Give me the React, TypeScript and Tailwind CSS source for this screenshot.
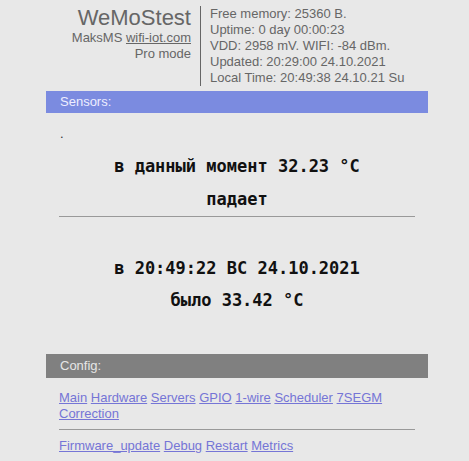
const info = [
  "Free memory: 25360 B.",
  "Uptime: 0 day 00:00:23",
  "VDD: 2958 mV. WIFI: -84 dBm.",
  "Updated: 20:29:00 24.10.2021",
  "Local Time: 20:49:38 24.10.21 Su",
];

const configLinks = ["Main", "Hardware", "Servers", "GPIO", "1-wire", "Scheduler", "7SEGM", "Correction"];
const toolLinks = ["Firmware_update", "Debug", "Restart", "Metrics"];

export default function App() {
  return (
    <div className="min-h-[461px] bg-[#e8e8e8] font-['Liberation_Sans',Arial,sans-serif] text-[13px]">
      <div className="ml-[46px] w-[382px]">
        <div className="flex pt-[6px]">
          <div className="w-[145px] text-right text-[#666]">
            <div className="text-[22px] leading-[24px]">WeMoStest</div>
            <div className="leading-[16px]">
              MaksMS <a className="underline text-[#666]">wifi-iot.com</a>
            </div>
            <div className="leading-[16px]">Pro mode</div>
          </div>
          <div className="mx-[9px] w-px bg-[#666]"></div>
          <div className="text-[#666] leading-[16px]">
            {info.map((l) => (
              <div key={l}>{l}</div>
            ))}
          </div>
        </div>

        <div className="mt-[5px] h-[22px] bg-[#7b8be0] pl-[14px] leading-[22px] text-[#eef]">Sensors:</div>

        <div className="mt-[13px] pl-[14px] leading-[16px] text-[#333]">.</div>

        <div className="mt-[8px] text-center font-['DejaVu_Sans_Mono',monospace] text-[17px] font-bold text-[#111]">
          <div className="leading-[33px]">в данный момент 32.23 °C</div>
          <div className="leading-[33px]">падает</div>
        </div>
        <div className="mx-[13px] border-t border-[#999]"></div>
        <div className="mt-[35px] text-center font-['DejaVu_Sans_Mono',monospace] text-[17px] font-bold text-[#111]">
          <div className="leading-[32px]">в 20:49:22 ВС 24.10.2021</div>
          <div className="leading-[32px]">было 33.42 °C</div>
        </div>

        <div className="mt-[38px] h-[24px] bg-[#808080] pl-[14px] leading-[24px] text-[#e6e6e6]">Config:</div>

        <div className="mt-[12px] pl-[13px] pr-[20px] leading-[16px]">
          {configLinks.map((l) => (
            <span key={l}>
              <a className="text-[#7575d6] underline">{l}</a>{" "}
            </span>
          ))}
        </div>
        <div className="mx-[13px] mt-[7px] border-t border-[#999]"></div>
        <div className="mt-[8px] pl-[13px] leading-[16px]">
          {toolLinks.map((l) => (
            <span key={l}>
              <a className="text-[#7575d6] underline">{l}</a>{" "}
            </span>
          ))}
        </div>
      </div>
    </div>
  );
}
